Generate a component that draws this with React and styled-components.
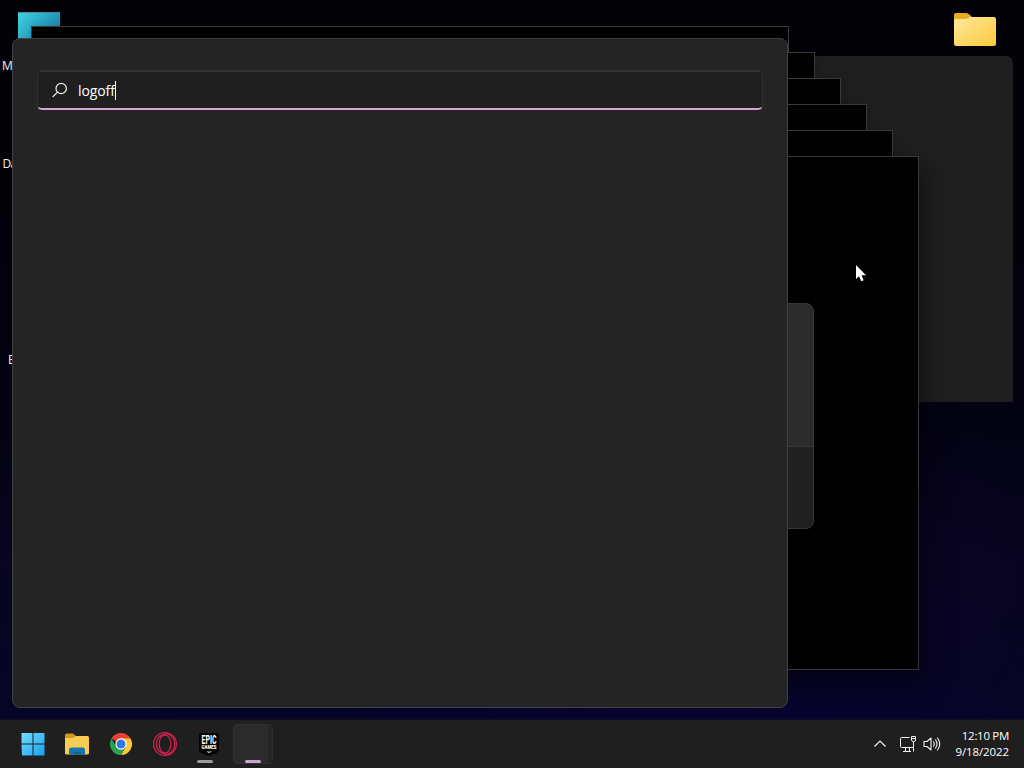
import React from 'react';
import styled, { createGlobalStyle } from 'styled-components';

const GlobalStyle = createGlobalStyle`
  * {
    box-sizing: border-box;
  }

  body {
    margin: 0;
    overflow: hidden;
    background: #020208;
    font-family: "Open Sans", "Noto Sans", sans-serif;
  }
`;

const Screen = styled.div`
  display: flex;
  flex-direction: column;
  width: 1024px;
  height: 768px;
  color: #fff;
`;

const Desktop = styled.main`
  position: relative;
  flex: 1;
  overflow: hidden;
  background:
    radial-gradient(ellipse 100px 170px at 955px 590px, rgba(16, 2, 44, 0.35), transparent),
    radial-gradient(ellipse 420px 80px at 680px 730px, rgba(12, 0, 64, 0.5), transparent),
    linear-gradient(180deg, #020207 0, #020209 200px, #030314 430px, #07051f 560px, #050526 100%);
`;

const DesktopIcon = styled.div`
  position: absolute;
  left: ${(p) => p.$x}px;
  top: ${(p) => p.$y}px;
  line-height: 0;
`;

const IconLabel = styled.span`
  position: absolute;
  left: ${(p) => p.$x}px;
  top: ${(p) => p.$y}px;
  font-size: 12px;
  line-height: 16px;
  letter-spacing: -0.8px;
  white-space: nowrap;
  color: #f2f2f2;
`;

const BackWindow = styled.div`
  position: absolute;
  left: 420px;
  top: 56px;
  width: 593px;
  height: 346px;
  border-radius: 7px 7px 1px 1px;
  background: #1f1f1f;
`;

const ConsoleWindow = styled.div`
  position: absolute;
  left: ${(p) => p.$x}px;
  top: ${(p) => p.$y}px;
  width: 758px;
  height: 514px;
  border: 1px solid ${(p) => (p.$front ? '#38363f' : '#3b3b3b')};
  background: #000;
  box-shadow: ${(p) => (p.$front ? '4px 12px 26px 2px rgba(0, 0, 0, 0.45)' : '0 2px 12px rgba(0, 0, 0, 0.22)')};
`;

const Dialog = styled.div`
  position: absolute;
  left: 480px;
  top: 303px;
  display: flex;
  flex-direction: column;
  width: 334px;
  height: 226px;
  overflow: hidden;
  border: 1px solid #353535;
  border-radius: 8px;
  background: #2b2b2b;
`;

const DialogBody = styled.div`
  flex: 1;
`;

const DialogFooter = styled.div`
  height: 82px;
  border-top: 1px solid #363636;
  background: #202020;
`;

const SearchPanel = styled.section`
  position: absolute;
  left: 12px;
  top: 38px;
  width: 776px;
  height: 670px;
  padding: 31px 24px;
  border: 1px solid #414144;
  border-radius: 8px;
  background: #242424;
`;

const SearchBox = styled.div`
  display: flex;
  align-items: center;
  width: 726px;
  height: 40px;
  padding: 0 14px;
  border: 1px solid #303030;
  border-top-width: 2px;
  border-bottom: 2px solid #d6a5dc;
  border-radius: 5px;
  background: #1f1f1f;
`;

const SearchText = styled.span`
  margin-left: 10px;
  padding-top: 2px;
  font-size: 14px;
  line-height: 20px;
  letter-spacing: -0.1px;
`;

const Caret = styled.span`
  width: 1px;
  height: 19px;
  margin-top: 1px;
  background: #fff;
`;

const Pointer = styled.svg`
  position: absolute;
  left: 855px;
  top: 264px;
`;

const Taskbar = styled.footer`
  position: relative;
  display: flex;
  align-items: center;
  justify-content: space-between;
  height: 48px;
  padding: 0 15px 0 13px;
  background: #1f1f1f;
  box-shadow: 0 0 3px #191921;
`;

const AppList = styled.div`
  display: flex;
  align-items: center;
  gap: 4px;
`;

const AppButton = styled.div`
  position: relative;
  display: flex;
  align-items: center;
  justify-content: center;
  width: 40px;
  height: 40px;
  border-radius: 4px;
  border: 1px solid ${(p) => (p.$active ? '#303030' : 'transparent')};
  background: ${(p) => (p.$active ? '#2b2b2b' : 'transparent')};
  box-shadow: ${(p) => (p.$active ? 'inset -4px 0 0 #252525' : 'none')};
`;

const Indicator = styled.span`
  position: absolute;
  left: ${(p) => p.$left}px;
  bottom: 0;
  width: 16px;
  height: 3px;
  border-radius: 2px;
  background: ${(p) => p.$color};
`;

const Tray = styled.div`
  display: flex;
  align-items: center;

  svg {
    display: block;
  }
`;

const TrayItem = styled.div`
  margin-right: ${(p) => p.$gap}px;
`;

const Clock = styled.div`
  width: 68px;
  font-size: 11.5px;
  line-height: 16px;
  letter-spacing: -0.1px;
  text-align: right;

  div:first-child {
    letter-spacing: -0.3px;
  }
`;

const consoles = [0, 1, 2, 3, 4, 5];

const FolderIcon = () => (
  <svg width="42" height="34" viewBox="0 0 42 34">
    <defs>
      <linearGradient id="folder" x1="0" y1="0" x2="1" y2="1">
        <stop offset="0" stopColor="#ffe9a0" />
        <stop offset="1" stopColor="#fbc83a" />
      </linearGradient>
    </defs>
    <path d="M0 2Q0 0 2 0H12Q14 0 16 2L19 5V12H0Z" fill="#e7ad22" />
    <path d="M0 7Q0 6 2 6H12L16 4H40Q42 4 42 6V31Q42 33 40 33H2Q0 33 0 31Z" fill="url(#folder)" />
  </svg>
);

const MonitorIcon = () => (
  <svg width="42" height="34" viewBox="0 0 42 34">
    <defs>
      <linearGradient id="monitor" x1="0" y1="0" x2="1" y2="0.7">
        <stop offset="0" stopColor="#3fd3df" />
        <stop offset="0.55" stopColor="#29a5c6" />
        <stop offset="1" stopColor="#167fa8" />
      </linearGradient>
    </defs>
    <rect width="42" height="34" fill="url(#monitor)" />
    <path d="M0 .5H42M41.500 0V34" stroke="#4b8997" />
  </svg>
);

const SearchIcon = () => (
  <svg width="16" height="16" viewBox="0 0 16 16" fill="none" stroke="#f4f4f4" strokeWidth="1.2">
    <circle cx="9.200" cy="6.500" r="5.200" />
    <path d="M5.500 10.200L1 14.700" strokeLinecap="round" />
  </svg>
);

const StartIcon = () => (
  <svg width="24" height="24" viewBox="0 0 24 24">
    <defs>
      <linearGradient id="start" x1="0" y1="0" x2="24" y2="24" gradientUnits="userSpaceOnUse">
        <stop offset="0" stopColor="#75e2fd" />
        <stop offset="1" stopColor="#159cf0" />
      </linearGradient>
    </defs>
    <path d="M1 1H11.500V11.500H.5V1ZM12.500 1H23.500V11.500H12.500ZM.5 12.500H11.500V23.500H1ZM12.500 12.500H23.500V23.500H12.500Z" fill="url(#start)" />
  </svg>
);

const ExplorerIcon = () => (
  <svg width="26" height="24" viewBox="0 0 26 24">
    <path d="M1 3Q1 1.500 3 1.500H9L12 4V8H1Z" fill="#d19a18" />
    <path d="M1 6H9L12 4H23.500Q25 4 25 5.500V21Q25 22.500 23.500 22.500H2.500Q1 22.500 1 21Z" fill="#f8cc52" />
    <path d="M5 22.500V18Q5 15.500 7.500 15.500H18.500Q21 15.500 21 18V22.500Z" fill="#1674b0" />
    <path d="M9 22.500V20.500Q9 20 9.500 20H16.500Q17 20 17 20.500V22.500Z" fill="#13639a" />
  </svg>
);

const ChromeIcon = () => (
  <svg width="24" height="24" viewBox="0 0 24 24">
    <path d="M12 12L2.470 6.500A11 11 0 0 1 21.530 6.500Z" fill="#e94235" />
    <path d="M12 6.500H21.530A11 11 0 0 1 12 23L16.760 14.750Z" fill="#fcc934" />
    <path d="M7.240 14.750L2.470 6.500A11 11 0 0 0 12 23L16.760 14.750Z" fill="#2aa14e" />
    <circle cx="12" cy="12" r="5.700" fill="#fff" />
    <circle cx="12" cy="12" r="4.500" fill="#3277e6" />
  </svg>
);

const OperaIcon = () => (
  <svg width="26" height="26" viewBox="0 0 26 26" fill="none" stroke="#d4234f" strokeWidth="1.200">
    <circle cx="13" cy="13" r="11.400" />
    <ellipse cx="13" cy="13" rx="5.800" ry="9.200" />
    <path d="M10 4.800C13 2.200 17 2.600 19 4.500C24 9 24 17 19 21.500C17 23.400 13 23.800 10 21.200" />
    <path d="M13 3.800C1.500 3.800 1.500 22.200 13 22.200" />
  </svg>
);

const EpicIcon = () => (
  <svg width="22" height="24" viewBox="0 0 22 24" overflow="visible">
    <path d="M1 3Q1 1 3 1H19Q21 1 21 3V18Q21 20 19 20.800L11 24L3 20.800Q1 20 1 18Z" fill="#030303" />
    <text x="3.500" y="11.800" textLength="15" lengthAdjust="spacingAndGlyphs" fontFamily="Roboto, sans-serif" fontSize="12" fontWeight="700" fill="#fff">EPIC</text>
    <text x="3.500" y="17" textLength="15" lengthAdjust="spacingAndGlyphs" fontFamily="Roboto, sans-serif" fontSize="4.500" fontWeight="900" fill="#fff">GAMES</text>
    <path d="M8 19.500H14L11 21Z" fill="#ddd" />
  </svg>
);

const ChevronIcon = () => (
  <svg width="14" height="10" viewBox="0 0 14 10" fill="none" stroke="#f2f2f2" strokeWidth="1.200">
    <path d="M1.500 7.500L7 2L12.500 7.500" />
  </svg>
);

const NetworkIcon = () => (
  <svg width="18" height="18" viewBox="0 0 18 18" fill="none" stroke="#f2f2f2">
    <path d="M10.500 2.500H2.500Q1.500 2.500 1.500 3.500V11.500Q1.500 12.500 2.500 12.500H9.500M14.500 7V16.500M6.500 12.500V16M10.500 12.500V16M4 16.500H12M9 12.500H14.500" />
    <path d="M12.500 1.500H16.500V5Q16.500 6.500 14.500 6.500Q12.500 6.500 12.500 5ZM12.500 3.500H16.500" />
  </svg>
);

const VolumeIcon = () => (
  <svg width="18" height="16" viewBox="0 0 18 16" fill="none" stroke="#f2f2f2" strokeWidth="1.100" strokeLinejoin="round" strokeLinecap="round">
    <path d="M1 5.500H4L8 2V14L4 10.500H1Z" />
    <path d="M10.500 5.800Q12 8 10.500 10.200M12.500 3.800Q15.500 8 12.500 12.200M14.500 2Q19 8 14.500 14" />
  </svg>
);

const App = () => {
  return (
    <>
      <GlobalStyle />
      <Screen>
        <Desktop>
          <DesktopIcon $x={18} $y={12}><MonitorIcon /></DesktopIcon>
          <DesktopIcon $x={954} $y={13}><FolderIcon /></DesktopIcon>
          <IconLabel $x={2} $y={58}>M</IconLabel>
          <IconLabel $x={2.5} $y={156}>Da</IconLabel>
          <IconLabel $x={8} $y={352}>E</IconLabel>

          <BackWindow />
          {consoles.map((i) => (
            <ConsoleWindow key={i} $x={31 + i * 26} $y={26 + i * 26} $front={i === 5} />
          ))}
          <Dialog>
            <DialogBody />
            <DialogFooter />
          </Dialog>

          <SearchPanel>
            <SearchBox>
              <SearchIcon />
              <SearchText>logoff</SearchText>
              <Caret />
            </SearchBox>
          </SearchPanel>

          <Pointer width="13" height="19" viewBox="0 0 13 19">
            <path d="M1 1V15L4 12.200L6.300 17.300L8.700 16.200L6.500 11.200H11Z" fill="#fff" />
          </Pointer>
        </Desktop>

        <Taskbar>
          <AppList>
            <AppButton><StartIcon /></AppButton>
            <AppButton><ExplorerIcon /></AppButton>
            <AppButton><ChromeIcon /></AppButton>
            <AppButton><OperaIcon /></AppButton>
            <AppButton>
              <EpicIcon />
              <Indicator $color="#9c9c9c" $left={7} />
            </AppButton>
            <AppButton $active>
              <Indicator $color="#cfa1d4" $left={11} />
            </AppButton>
          </AppList>
          <Tray>
            <TrayItem $gap={12}><ChevronIcon /></TrayItem>
            <TrayItem $gap={6}><NetworkIcon /></TrayItem>
            <TrayItem $gap={0}><VolumeIcon /></TrayItem>
            <Clock>
              <div>12:10 PM</div>
              <div>9/18/2022</div>
            </Clock>
          </Tray>
        </Taskbar>
      </Screen>
    </>
  );
};

export default App;
